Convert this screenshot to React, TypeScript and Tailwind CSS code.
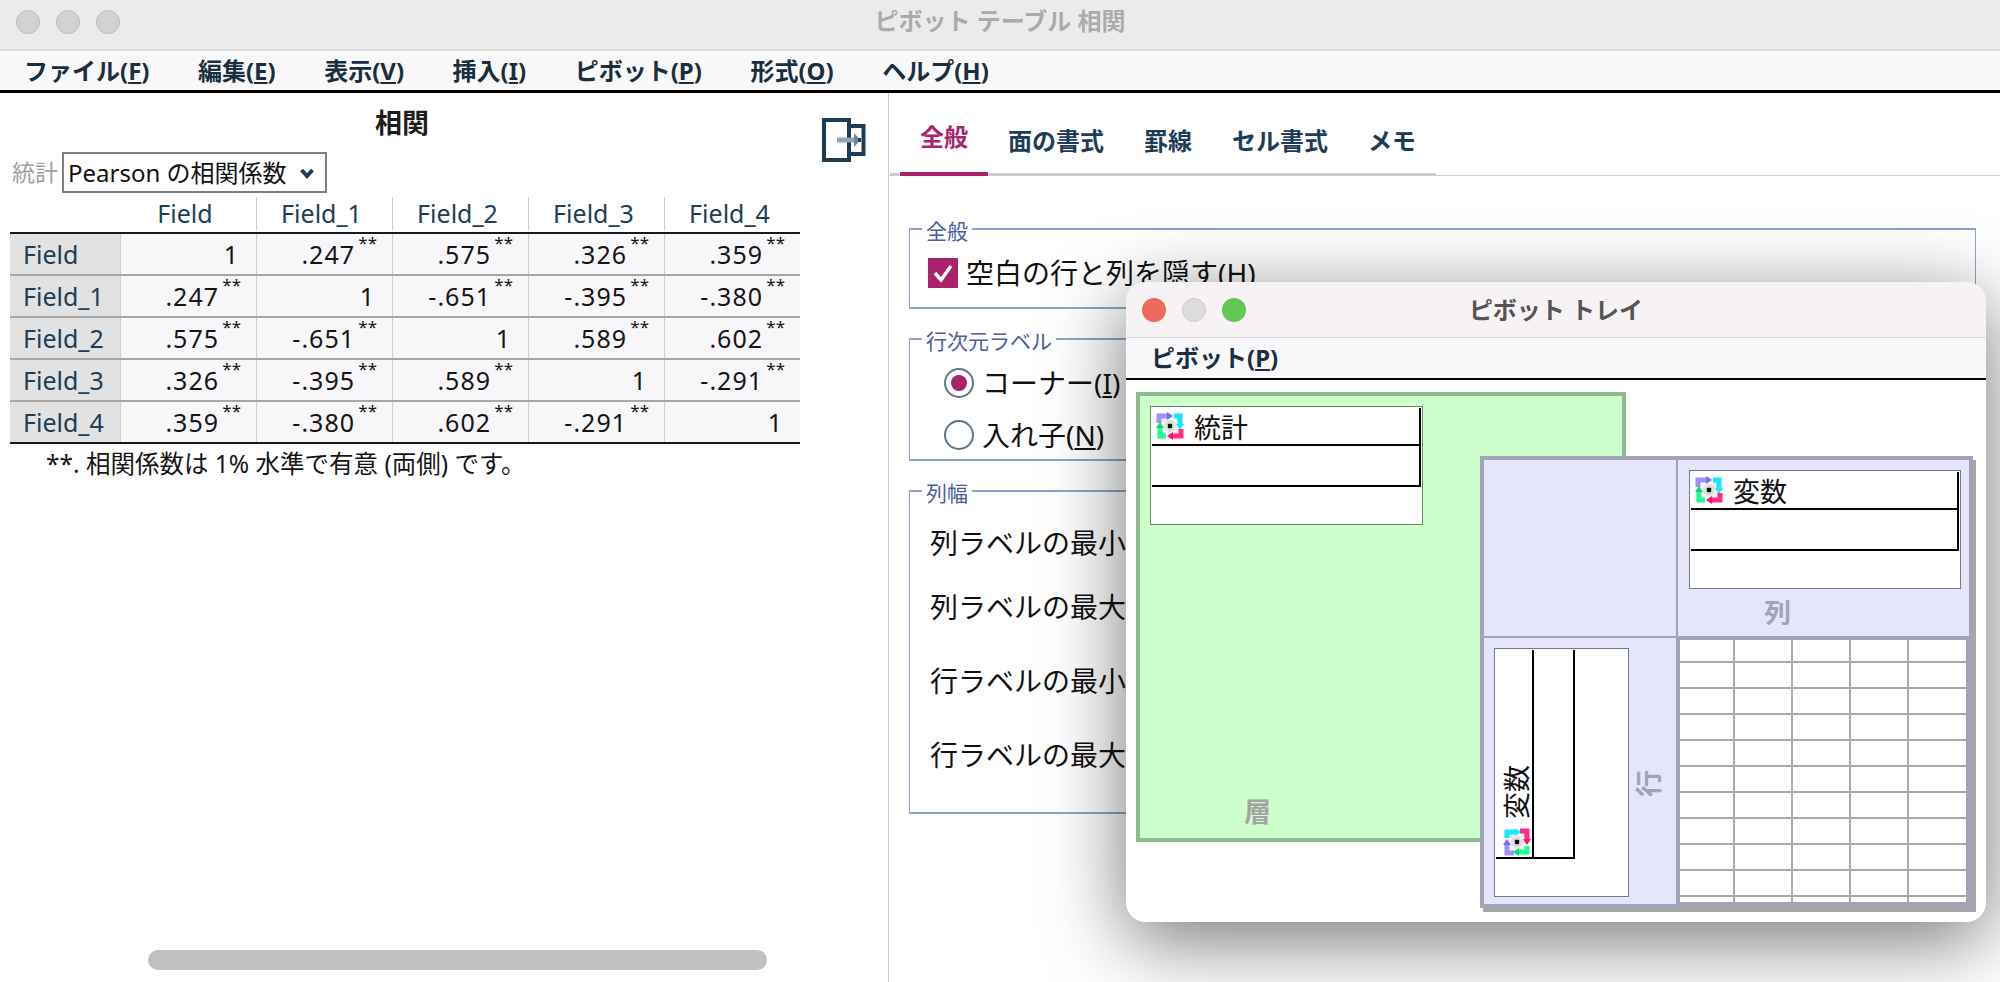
import React from "react";

const JP = "font-['Noto_Sans','Noto_Sans_CJK_JP',sans-serif]";

function PivotIcon({ className = "" }: { className?: string }) {
  return (
    <svg viewBox="0 0 30 30" className={"h-[30px] w-[30px] shrink-0 " + className}>
      <rect x="2" y="2" width="26" height="26" fill="#f6f6f6" />
      <circle cx="15" cy="15" r="6" fill="#dedede" />
      <rect x="12.8" y="12.8" width="4.4" height="4.4" rx="1" fill="#111" />
      <path d="M4 12 V5 H13" fill="none" stroke="#a58cff" strokeWidth="5" />
      <path d="M12 1 L18 5 L12 9 Z" fill="#6f6cff" />
      <path d="M19 5 H25 V13" fill="none" stroke="#14e9ff" strokeWidth="5" />
      <path d="M21 13 L25 19 L29 13 Z" fill="#14e9ff" />
      <path d="M26 18 V25 H17" fill="none" stroke="#ff2a8a" strokeWidth="5" />
      <path d="M18 21 L12 25 L18 29 Z" fill="#ff1070" />
      <path d="M11 25 H5 V17" fill="none" stroke="#1dff8c" strokeWidth="5" />
      <path d="M1 17 L5 11 L9 17 Z" fill="#00e070" />
    </svg>
  );
}

function Mn({ label, k }: { label: string; k: string }) {
  return (
    <span className="whitespace-nowrap">
      {label}(<u className="underline underline-offset-2">{k}</u>)
    </span>
  );
}

const menus: [string, string][] = [
  ["ファイル", "F"],
  ["編集", "E"],
  ["表示", "V"],
  ["挿入", "I"],
  ["ピボット", "P"],
  ["形式", "O"],
  ["ヘルプ", "H"],
];

const heads = ["Field", "Field_1", "Field_2", "Field_3", "Field_4"];
const rows: string[][] = [
  ["1", ".247", ".575", ".326", ".359"],
  [".247", "1", "-.651", "-.395", "-.380"],
  [".575", "-.651", "1", ".589", ".602"],
  [".326", "-.395", ".589", "1", "-.291"],
  [".359", "-.380", ".602", "-.291", "1"],
];

function Cell({ v }: { v: string }) {
  const one = v === "1";
  return (
    <div className="relative flex items-center justify-end border-l border-[#cfcfcf] bg-[#f7f7fa] pr-[17px] tracking-[1px] text-[#151515]">
      <span className={one ? "" : "mr-[20px]"}>{v}</span>
      {!one && <span className="absolute right-[15px] top-[-1px] text-[17px] leading-[20px] tracking-normal">**</span>}
    </div>
  );
}

function LeftPanel() {
  return (
    <div className="flex w-[889px] shrink-0 flex-col border-r border-[#cfcfcf]">
      <div className="flex">
        <div className="w-[810px] pl-[10px]">
          <div className="flex h-[59px] w-[790px] items-center justify-center pr-[6px] pt-[2px] text-[27px] font-bold text-[#1d1d1d]">相関</div>
          <div className="flex h-[41px] items-center">
            <span className="w-[52px] whitespace-nowrap pl-[2px] text-[23px] text-[#a0a0a0]">統計</span>
            <div className="flex h-[41px] w-[265px] items-center justify-between border-2 border-[#808080] pl-[4px] pr-[10px] text-[24px] text-[#111]">
              <span className="whitespace-nowrap">Pearson の相関係数</span>
              <svg viewBox="0 0 16 12" className="h-[12px] w-[16px]">
                <path d="M2.5 3 L8 9 L13.5 3" fill="none" stroke="#1d3c56" strokeWidth="4" />
              </svg>
            </div>
          </div>
          <div className="mt-[4px] w-[790px] text-[25px] leading-none text-[#203e57]">
            <div className="grid h-[37px] grid-cols-[110px_136px_136px_136px_136px_136px] border-b-[2px] border-[#1a1a1a] pb-[2px]">
              <div />
              {heads.map((h, i) => (
                <div key={h} className={"flex items-center justify-center pr-[6px] " + (i > 0 ? "border-l border-[#cfcfcf]" : "")}>{h}</div>
              ))}
            </div>
            {rows.map((r, i) => (
              <div
                key={i}
                className={
                  "grid h-[42px] grid-cols-[110px_136px_136px_136px_136px_136px] border-b-[2px] " +
                  (i === 4 ? "border-[#1a1a1a]" : "border-[#a8a8a8]")
                }
              >
                <div className="flex items-center bg-[#e2e2e2] pl-[13px]">{heads[i]}</div>
                {r.map((v, j) => (
                  <Cell key={j} v={v} />
                ))}
              </div>
            ))}
            <div className="mt-[6px] whitespace-nowrap pl-[36px] text-[24.5px] leading-[28px] text-[#151515]">**. 相関係数は 1% 水準で有意 (両側) です。</div>
          </div>
        </div>
        <div className="pl-[12px] pt-[25px]">
          <svg viewBox="0 0 44 44" className="h-[44px] w-[44px]">
            <path d="M28 8 H41.5 V36 H28" fill="none" stroke="#1d3c56" strokeWidth="4" />
            <rect x="2" y="2" width="25" height="40" fill="none" stroke="#1d3c56" strokeWidth="4" />
            <rect x="15" y="19.5" width="19" height="5" fill="#93a4b0" />
            <path d="M32 15 L38.5 22 L32 29 Z" fill="#6f8697" />
            <rect x="36" y="20" width="3" height="4" fill="#1d3c56" />
          </svg>
        </div>
      </div>
      <div className="mb-[12px] ml-[148px] mt-auto h-[20px] w-[619px] rounded-[10px] bg-[#c0c0c0]" />
    </div>
  );
}

function Group({ title, className, children }: { title: string; className: string; children?: React.ReactNode }) {
  return (
    <fieldset className={"border-x border-b-[2px] border-t-[2px] border-[#8aa5c8] " + className}>
      <legend className="ml-[12px] px-[4px] text-[21px] leading-[26px] text-[#4d5c9e]">
        <span className="block translate-y-[2px]">{title}</span>
      </legend>
      {children}
    </fieldset>
  );
}

function Radio({ on }: { on?: boolean }) {
  return (
    <span className="flex h-[30px] w-[30px] shrink-0 items-center justify-center rounded-full border-[2px] border-[#5f7484] bg-white">
      {on && <span className="h-[16px] w-[16px] rounded-full bg-[#a8226c]" />}
    </span>
  );
}

function RightPanel() {
  const tabs = ["面の書式", "罫線", "セル書式", "メモ"];
  return (
    <div className="flex flex-1 flex-col">
      <div className="h-[83px] border-b border-[#cfcfcf]">
        <div className="ml-[1px] flex h-[83px] w-[546px] border-b-[3px] border-[#cccccc] text-[24px] font-bold text-[#1d3c56]">
          <div className="-mb-[3px] ml-[10px] flex h-[83px] w-[88px] items-start justify-center border-b-[4px] border-[#a8226c] pt-[26px] text-[#a8226c]">全般</div>
          {tabs.map((t) => (
            <div key={t} className="flex items-start whitespace-nowrap px-[20px] pt-[30px]">{t}</div>
          ))}
        </div>
      </div>
      <div className="flex flex-col pl-[20px] pr-[24px] pt-[40px] text-[28px] leading-[30px] text-[#111]">
        <Group title="全般" className="h-[93px]">
          <div className="flex items-center gap-[8px] pl-[18px] pt-[16px]">
            <span className="flex h-[30px] w-[30px] shrink-0 items-center justify-center bg-[#a8226c]">
              <svg viewBox="0 0 30 30" className="h-[30px] w-[30px]">
                <path d="M7 15 L13 22 L23 8" fill="none" stroke="#fff" strokeWidth="3.5" />
              </svg>
            </span>
            <Mn label="空白の行と列を隠す" k="H" />
          </div>
        </Group>
        <Group title="行次元ラベル" className="mt-[17px] h-[135px]">
          <div className="flex flex-col gap-[22px] pl-[34px] pt-[16px]">
            <div className="flex items-center gap-[8px]"><Radio on /><Mn label="コーナー" k="I" /></div>
            <div className="flex items-center gap-[8px]"><Radio /><Mn label="入れ子" k="N" /></div>
          </div>
        </Group>
        <Group title="列幅" className="mt-[17px] h-[336px]">
          <div className="flex flex-col pl-[20px] pt-[21px] leading-[36px]">
            <span>列ラベルの最小値</span>
            <span className="mt-[28px]">列ラベルの最大値</span>
            <span className="mt-[38px]">行ラベルの最小値</span>
            <span className="mt-[38px]">行ラベルの最大値</span>
          </div>
        </Group>
      </div>
    </div>
  );
}

function TrayPanel({ title, border, className }: { title: string; border: string; className: string }) {
  return (
    <div className={"border bg-white p-px " + border + " " + className}>
      <div className="border-r-[2px] border-black">
        <div className="flex h-[38px] items-center gap-[9px] border-b-[2px] border-black pl-[3px] text-[27px] text-[#111]">
          <PivotIcon />
          <span className="pt-[4px] leading-[30px]">{title}</span>
        </div>
        <div className="h-[41px] border-b-[2px] border-black" />
      </div>
    </div>
  );
}

function Tray() {
  return (
    <div className="absolute left-[1126px] top-[282px] flex h-[640px] w-[860px] flex-col overflow-hidden rounded-[20px] bg-white shadow-[0_18px_80px_rgba(0,0,0,0.55)]">
      <div className="relative flex h-[56px] shrink-0 items-center justify-center border-b border-[#d8d6d8] bg-[#f7f3f4] text-[24px] font-bold text-[#555]">
        <div className="absolute left-[16px] top-[16px] flex gap-[16px]">
          <span className="h-[24px] w-[24px] rounded-full bg-[#ec6b5e]" />
          <span className="h-[24px] w-[24px] rounded-full border border-[#cfcbcb] bg-[#dddbdb]" />
          <span className="h-[24px] w-[24px] rounded-full bg-[#62c554]" />
        </div>
        ピボット トレイ
      </div>
      <div className="flex h-[42px] shrink-0 items-center border-b-[2px] border-black bg-[#f8f8fa] pl-[25px] text-[24px] font-bold text-[#1a2e3e]">
        <Mn label="ピボット" k="P" />
      </div>
      <div className="relative flex-1 bg-white">
        <div className="absolute left-[10px] top-[12px] h-[450px] w-[490px] border-[4px] border-[#8fb98f] bg-[#ccffcc] pl-[10px] pt-[10px]">
          <TrayPanel title="統計" border="border-[#668866]" className="h-[119px] w-[273px]" />
          <div className="absolute left-[104px] top-[396px] text-[27px] font-bold text-[#a3a3a3]">層</div>
        </div>
        <div className="absolute left-[354px] top-[76px] grid h-[452px] w-[493px] grid-cols-[194px_1fr] grid-rows-[178px_1fr] border-[4px] border-[#a3a3b8] bg-[#e6e6fa] shadow-[3px_4px_0_#a6a6a6]">
          <div className="border-b-[2px] border-r-[2px] border-[#a3a3b8]" />
          <div className="flex flex-col items-start border-b-[2px] border-[#a3a3b8] pl-[11px] pt-[10px]">
            <TrayPanel title="変数" border="border-[#77778f]" className="h-[119px] w-[272px]" />
            <div className="ml-[75px] mt-[6px] text-[27px] font-bold leading-[36px] text-[#a3a3b8]">列</div>
          </div>
          <div className="flex border-r-[2px] border-[#a3a3b8] pl-[10px] pt-[10px]">
            <div className="h-[249px] w-[135px] shrink-0 border border-[#77778f] bg-white pl-px pt-px">
              <div className="flex h-[209px] w-[79px] border-b-[2px] border-r-[2px] border-black">
                <div className="flex w-[38px] flex-col items-end justify-end border-r-[2px] border-black">
                  <span className="rotate-180 text-[27px] leading-[30px] text-[#111] [text-orientation:sideways] [writing-mode:vertical-rl]">変数</span>
                  <PivotIcon className="mt-[8px] -rotate-90" />
                </div>
              </div>
            </div>
            <div className="flex flex-1 items-center justify-center pr-[12px] pt-[14px]">
              <span className="rotate-180 text-[27px] font-bold text-[#a3a3b8] [text-orientation:sideways] [writing-mode:vertical-rl]">行</span>
            </div>
          </div>
          <div className="overflow-hidden bg-[#a3a3b8] pl-[2px] pt-[2px]">
            <div className="grid w-[286px] grid-cols-[53px_56px_56px_56px_57px] grid-rows-[21px_repeat(9,24px)_5px] gap-[2px] bg-[#aaaaaa]">
              {Array.from({ length: 55 }).map((_, i) => (
                <div key={i} className="bg-white" />
              ))}
            </div>
          </div>
        </div>
      </div>
    </div>
  );
}

export default function App() {
  return (
    <div className={"relative h-[982px] w-[2000px] overflow-hidden bg-white " + JP}>
      <div className="flex h-full flex-col">
        <div className="flex h-[51px] shrink-0 items-center justify-center border-b-[2px] border-[#dcdcdc] bg-[#ebebeb] pb-[8px] text-[24px] font-bold text-[#ababab]">
          <div className="absolute left-[16px] top-[10px] flex gap-[16px]">
            <span className="h-[24px] w-[24px] rounded-full border border-[#bdbdbd] bg-[#d2d2d2]" />
            <span className="h-[24px] w-[24px] rounded-full border border-[#bdbdbd] bg-[#d2d2d2]" />
            <span className="h-[24px] w-[24px] rounded-full border border-[#bdbdbd] bg-[#d2d2d2]" />
          </div>
          ピボット テーブル 相関
        </div>
        <div className="flex h-[42px] shrink-0 items-center gap-[48.5px] border-b-[3px] border-black bg-[#f8f8f8] pl-[24px] text-[24px] font-bold text-[#1a2e3e]">
          {menus.map(([l, k]) => (
            <Mn key={k} label={l} k={k} />
          ))}
        </div>
        <div className="flex flex-1 overflow-hidden">
          <LeftPanel />
          <RightPanel />
        </div>
      </div>
      <Tray />
    </div>
  );
}
